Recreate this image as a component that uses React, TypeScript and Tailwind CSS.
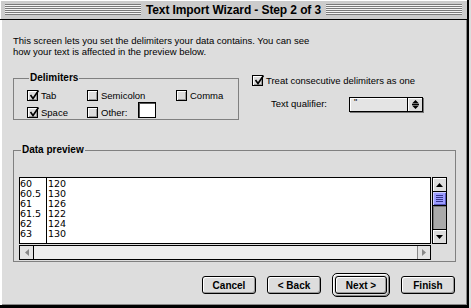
import React from 'react';

const stripes =
  'h-[11px] flex-1 bg-[repeating-linear-gradient(to_bottom,#7a7a7a_0px,#7a7a7a_1px,#f4f4f4_1px,#f4f4f4_2px)]';

function Check({ on }: { on?: boolean }) {
  return (
    <span className="relative block w-[11px] h-[11px] shrink-0 border border-black bg-[#dcdcdc] shadow-[inset_1px_1px_0_#fff,inset_-1px_-1px_0_#9a9a9a]">
      {on && (
        <svg
          className="absolute left-[1px] top-[-1px] overflow-visible"
          width="10"
          height="10"
          viewBox="0 0 10 10"
        >
          <path d="M1.5 5 L4 8.5 L9.5 0.5" fill="none" stroke="#000" strokeWidth="1.6" />
        </svg>
      )}
    </span>
  );
}

function Btn({ label, def }: { label: string; def?: boolean }) {
  const inner = (
    <div className="h-[18px] flex items-center justify-center rounded-[3px] border border-black bg-[#dddddd] shadow-[inset_1px_1px_0_#fff,inset_-1px_-1px_0_#999] text-[10px] font-bold">
      {label}
    </div>
  );
  if (def) {
    return (
      <div className="w-[58px] p-[2px] rounded-[5px] border border-black bg-[#dddddd] shadow-[inset_1px_1px_0_#fff,inset_-1px_-1px_0_#888]">
        {inner}
      </div>
    );
  }
  return <div className="w-[54px]">{inner}</div>;
}

const rows = [
  ['60', '120'],
  ['60.5', '130'],
  ['61', '126'],
  ['61.5', '122'],
  ['62', '124'],
  ['63', '130'],
];

export default function App() {
  return (
    <div
      className="w-[471px] h-[308px] bg-[#dddddd] overflow-hidden text-black"
      style={{ fontFamily: '"Liberation Sans", Arial, sans-serif' }}
    >
      <div className="w-[469px] h-[308px] flex flex-col border-r-2 border-b-[3px] border-black">
        {/* Title bar */}
        <div className="h-[20px] flex items-center gap-[4px] px-[5px] bg-[#cccccc] border-b border-black shadow-[inset_1px_1px_0_#fff]">
          <div className={stripes} />
          <div className="text-[12px] font-bold leading-none tracking-[-0.1px] px-[1px]">
            Text Import Wizard - Step 2 of 3
          </div>
          <div className={stripes} />
        </div>

        {/* Body */}
        <div className="flex-1 flex flex-col bg-[#dddddd] border-l-2 border-white shadow-[inset_-1px_-1px_0_#888] pl-[11px] pr-[11px]">
          <p className="mt-[15px] text-[9.5px] leading-[11px]">
            This screen lets you set the delimiters your data contains. You can see
            <br />
            how your text is affected in the preview below.
          </p>

          <div className="flex mt-[16px]">
            <fieldset className="w-[226px] h-[47px] border border-[#808080] pl-[13px]">
              <legend className="ml-[2px] px-[1px] text-[10px] font-bold leading-[10px]">
                Delimiters
              </legend>
              <div className="grid grid-cols-[60px_89px_auto] gap-y-[6px] mt-[7px] text-[9.5px] leading-[10px]">
                <label className="flex items-center gap-[3px]">
                  <Check on /> Tab
                </label>
                <label className="flex items-center gap-[3px]">
                  <Check /> Semicolon
                </label>
                <label className="flex items-center gap-[3px]">
                  <Check /> Comma
                </label>
                <label className="flex items-center gap-[3px]">
                  <Check on /> Space
                </label>
                <div className="flex items-center gap-[3px] relative">
                  <Check /> Other:
                  <span className="absolute left-[51px] top-[-5px] w-[18px] h-[16px] bg-white border border-black shadow-[inset_1px_1px_0_#555]" />
                </div>
                <div />
              </div>
            </fieldset>

            <div className="ml-[13px] mt-[2px] flex flex-col">
              <label className="flex items-center gap-[3px] text-[9.5px] leading-[11px]">
                <Check on /> Treat consecutive delimiters as one
              </label>
              <div className="flex items-center mt-[11px] ml-[19px]">
                <span className="w-[78px] text-[9.5px]">Text qualifier:</span>
                <div className="w-[74px] h-[15px] flex border border-black bg-[#e4e4e4] shadow-[1px_1px_0_#777,inset_1px_1px_0_#fff]">
                  <span className="flex-1 pl-[4px] text-[9px] leading-[9px] text-black">"</span>
                  <span className="w-[15px] border-l border-black flex flex-col items-center justify-center gap-[1px] bg-[#dddddd] shadow-[inset_1px_1px_0_#fff]">
                    <svg width="7" height="9" viewBox="0 0 7 9">
                      <path d="M3.5 0 L7 3.5 L0 3.5 Z M0 5.5 L7 5.5 L3.5 9 Z" fill="#000" />
                      <rect x="0" y="4" width="7" height="1" fill="#000" />
                    </svg>
                  </span>
                </div>
              </div>
            </div>
          </div>

          <fieldset className="w-[443px] mt-[25px] border border-[#808080] pl-[5px] pb-[1px]">
            <legend className="ml-[2px] px-[1px] text-[10px] font-bold leading-[10px]">
              Data preview
            </legend>
            <div className="mt-[22px] flex gap-[1px]">
              <div className="w-[412px] h-[67px] bg-white border border-black flex">
                <div
                  className="w-[27px] border-r border-black pt-[1px] text-[9.5px] leading-[10px]"
                  style={{ fontFamily: '"DejaVu Sans", "Liberation Sans", sans-serif' }}
                >
                  {rows.map((r) => (
                    <div key={r[0]}>{r[0]}</div>
                  ))}
                </div>
                <div
                  className="pl-[1px] pt-[1px] text-[9.5px] leading-[10px]"
                  style={{ fontFamily: '"DejaVu Sans", "Liberation Sans", sans-serif' }}
                >
                  {rows.map((r) => (
                    <div key={r[0]}>{r[1]}</div>
                  ))}
                </div>
              </div>
              <div className="w-[15px] h-[67px] border border-black flex flex-col bg-[#aaaaaa]">
                <div className="h-[14px] border-b border-black bg-[#dddddd] flex items-center justify-center shadow-[inset_1px_1px_0_#fff]">
                  <svg width="7" height="4" viewBox="0 0 7 4">
                    <path d="M3.5 0 L7 4 L0 4 Z" fill="#000" />
                  </svg>
                </div>
                <div className="h-[14px] border-b border-black bg-[#9c9cff] flex flex-col items-center justify-center gap-[1px] shadow-[inset_1px_1px_0_#ccf,inset_-1px_-1px_0_#5555bb]">
                  {[0, 1, 2, 3].map((i) => (
                    <span key={i} className="block w-[7px] h-[1px] bg-[#33338a]" />
                  ))}
                </div>
                <div className="flex-1 shadow-[inset_1px_1px_0_#777]" />
                <div className="h-[14px] border-t border-black bg-[#dddddd] flex items-center justify-center shadow-[inset_1px_1px_0_#fff]">
                  <svg width="7" height="4" viewBox="0 0 7 4">
                    <path d="M0 0 L7 0 L3.5 4 Z" fill="#000" />
                  </svg>
                </div>
              </div>
            </div>
            <div className="w-[412px] h-[15px] mt-[1px] border border-black flex bg-[#eeeeee]">
              <div className="w-[14px] border-r border-black flex items-center justify-center bg-[#e4e4e4]">
                <svg width="4" height="7" viewBox="0 0 4 7">
                  <path d="M4 0 L4 7 L0 3.5 Z" fill="#888" />
                </svg>
              </div>
              <div className="flex-1" />
              <div className="w-[13px] border-l border-[#888] flex items-center justify-center bg-[#e4e4e4]">
                <svg width="4" height="7" viewBox="0 0 4 7">
                  <path d="M0 0 L0 7 L4 3.5 Z" fill="#888" />
                </svg>
              </div>
            </div>
          </fieldset>

          <div className="flex items-center justify-end gap-[11px] mt-[11px] pr-[1px]">
            <Btn label="Cancel" />
            <Btn label="< Back" />
            <Btn label="Next >" def />
            <Btn label="Finish" />
          </div>
        </div>
      </div>
    </div>
  );
}
